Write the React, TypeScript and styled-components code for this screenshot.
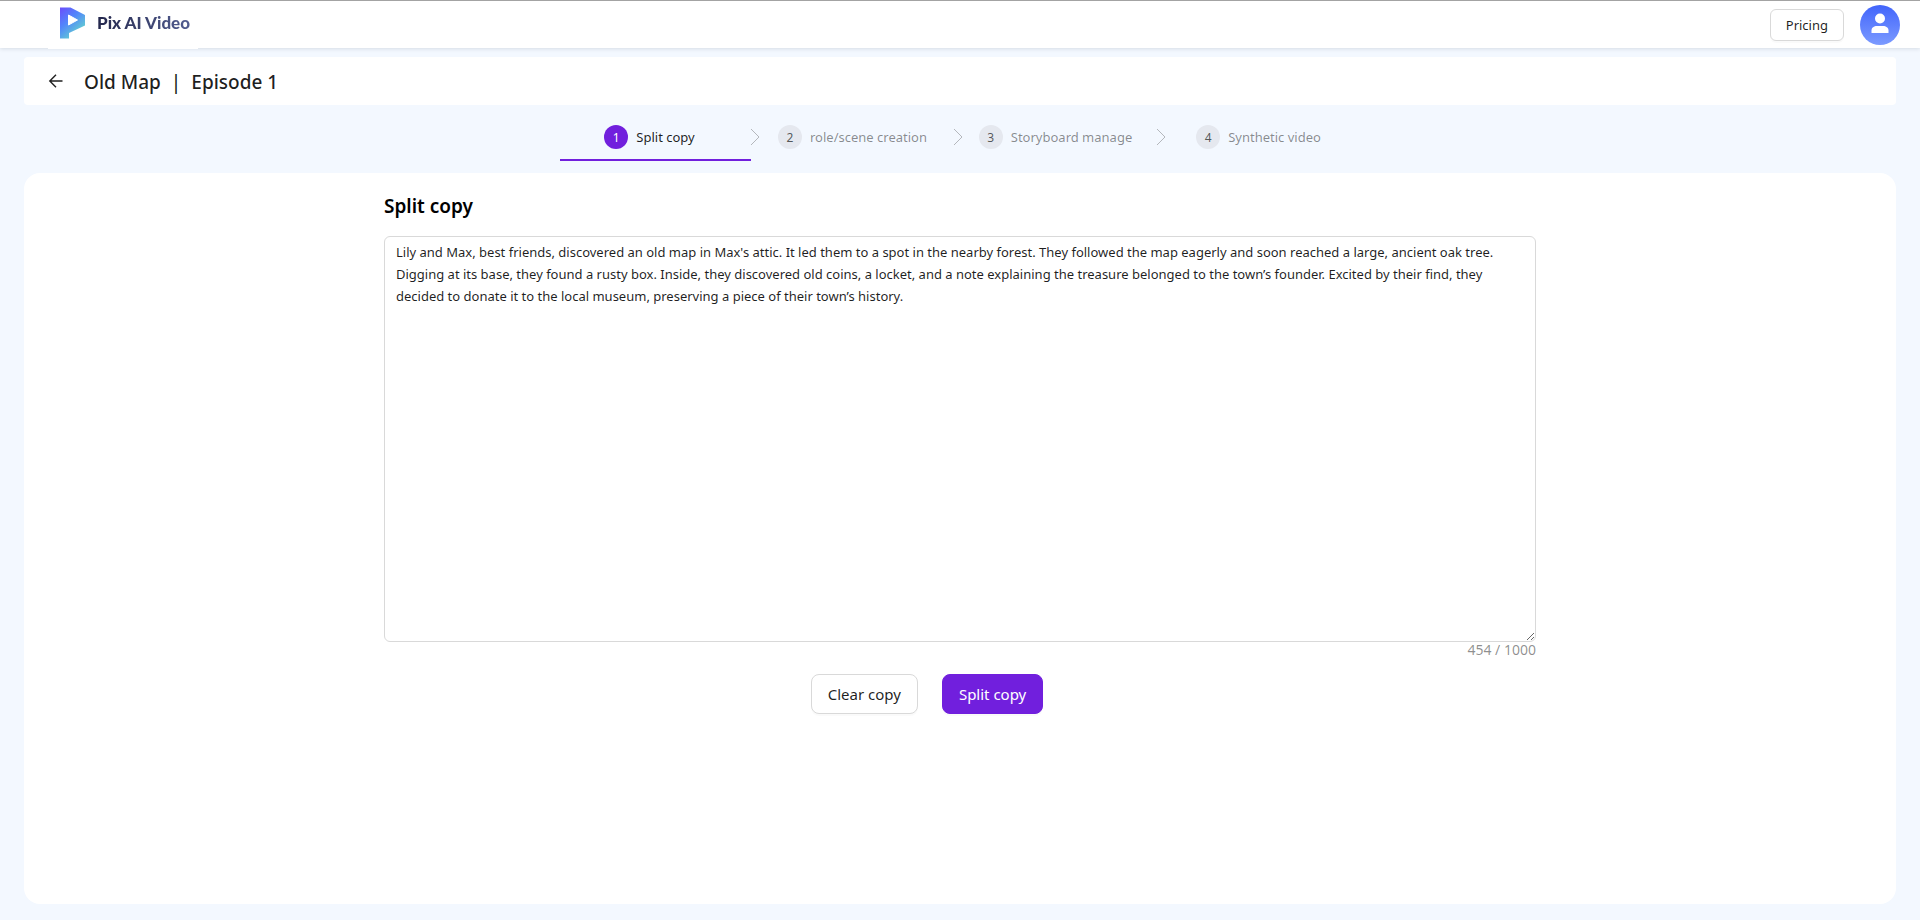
import React, { useState } from "react";
import styled, { createGlobalStyle, css } from "styled-components";

const INITIAL_COPY =
  "Lily and Max, best friends, discovered an old map in Max's attic. It led them to a spot in the nearby forest. They followed the map eagerly and soon reached a large, ancient oak tree. Digging at its base, they found a rusty box. Inside, they discovered old coins, a locket, and a note explaining the treasure belonged to the town’s founder. Excited by their find, they decided to donate it to the local museum, preserving a piece of their town’s history.";

const STEPS = ["Split copy", "role/scene creation", "Storyboard manage", "Synthetic video"];

const GlobalStyle = createGlobalStyle`
  *, *::before, *::after { box-sizing: border-box; }
  body {
    margin: 0;
    background: #f3f8ff;
    color: rgba(0, 0, 0, 0.88);
    font-family: "Segoe UI", "Noto Sans", "Open Sans", sans-serif;
    font-size: 13px;
    line-height: 22px;
  }
  button, textarea { font-family: inherit; }
`;

const Page = styled.div`
  display: flex;
  flex-direction: column;
  min-height: 100vh;
`;

const Header = styled.header`
  display: flex;
  align-items: center;
  justify-content: space-between;
  height: 48px;
  padding: 0 20px 0 48px;
  border-top: 1px solid #a3a3a3;
  background: #fff;
  box-shadow: 0 1px 4px rgba(0, 21, 41, 0.12);
`;

const Brand = styled.a`
  display: flex;
  align-items: center;
  gap: 12px;
  height: 48px;
  padding: 0 8px 4px 12px;
  background: #fff;
  text-decoration: none;
`;

const BrandName = styled.span`
  font-family: Lato, sans-serif;
  font-size: 17px;
  font-weight: 900;
  line-height: 24px;
  background: linear-gradient(90deg, #23274c, #525d90);
  background-clip: text;
  color: transparent;
`;

const HeaderActions = styled.div`
  display: flex;
  align-items: center;
  gap: 16px;
`;

const Button = styled.button<{ $primary?: boolean; $large?: boolean }>`
  height: 32px;
  padding: 0 15px;
  border: 1px solid #d9d9d9;
  border-radius: 6px;
  background: #fff;
  color: rgba(0, 0, 0, 0.88);
  box-shadow: 0 2px 0 rgba(0, 0, 0, 0.02);
  font-size: 13px;
  line-height: 22px;
  cursor: pointer;
  ${(p) =>
    p.$large &&
    css`
      height: 40px;
      padding: 0 16px;
      border-radius: 8px;
      font-size: 15px;
      line-height: 24px;
    `}
  ${(p) =>
    p.$primary &&
    css`
      border-color: #711fdd;
      background: #711fdd;
      color: #fff;
    `}
`;

const IconButton = styled.button`
  display: flex;
  padding: 0;
  border: 0;
  background: none;
  color: inherit;
  cursor: pointer;
`;

const Body = styled.main`
  display: flex;
  flex: 1;
  flex-direction: column;
  padding: 9px 24px 16px;
`;

const TitleBar = styled.div`
  display: flex;
  align-items: center;
  gap: 20px;
  height: 48px;
  padding: 0 24px;
  border-radius: 4px;
  background: #fff;
`;

const PageTitle = styled.h1`
  display: flex;
  gap: 10px;
  margin: 0;
  padding-top: 2px;
  font-size: 19px;
  font-weight: 500;
  line-height: 28px;
`;

const StepsRow = styled.nav`
  padding-right: 12px;
`;

const StepList = styled.ol`
  display: grid;
  grid-template-columns: repeat(4, 1fr);
  width: 100%;
  max-width: 812px;
  margin: 8px auto 12px;
  padding: 0;
  list-style: none;
`;

const Step = styled.li<{ $active: boolean }>`
  position: relative;
  display: flex;
  align-items: center;
  justify-content: center;
  gap: 8px;
  height: 48px;
  color: ${(p) => (p.$active ? "rgba(0, 0, 0, 0.88)" : "rgba(0, 0, 0, 0.45)")};
  ${(p) =>
    p.$active &&
    css`
      &::after {
        content: "";
        position: absolute;
        right: 0;
        bottom: 0;
        left: 12px;
        height: 2px;
        background: #711fdd;
      }
    `}
`;

const StepNumber = styled.span<{ $active: boolean }>`
  display: flex;
  align-items: center;
  justify-content: center;
  width: 24px;
  height: 24px;
  padding-top: 1px;
  border-radius: 50%;
  background: ${(p) => (p.$active ? "#711fdd" : "#e5e8ef")};
  color: ${(p) => (p.$active ? "#fff" : "rgba(0, 0, 0, 0.65)")};
  font-size: 12px;
`;

const StepArrow = styled.svg`
  position: absolute;
  top: 15px;
  left: 100%;
`;

const Panel = styled.section`
  flex: 1;
  padding: 20px 24px;
  border-radius: 16px;
  background: #fff;
`;

const Content = styled.div`
  display: flex;
  flex-direction: column;
  max-width: 1152px;
  margin: 0 auto;
`;

const SectionTitle = styled.label`
  margin-bottom: 17px;
  color: #000;
  font-size: 19px;
  font-weight: 600;
  line-height: 26px;
`;

const CopyInput = styled.textarea`
  display: block;
  width: 100%;
  height: 406px;
  padding: 4px 11px;
  border: 1px solid #d9d9d9;
  border-radius: 6px;
  outline: 0;
  background: #fff;
  color: rgba(0, 0, 0, 0.88);
  font-size: 13px;
  line-height: 22px;
  resize: vertical;
`;

const Counter = styled.output`
  align-self: flex-end;
  height: 20px;
  color: rgba(0, 0, 0, 0.45);
  font-size: 14px;
  line-height: 16px;
`;

const Actions = styled.div`
  display: flex;
  justify-content: center;
  gap: 24px;
  margin-top: 12px;
  padding-right: 66px;
`;

const Logo = () => (
  <svg width="25" height="32" viewBox="0 0 25 32" aria-hidden="true">
    <defs>
      <linearGradient id="logo-fill" x1="0" y1="0" x2="0.7" y2="1">
        <stop offset="0" stopColor="#6a4dfb" />
        <stop offset="0.45" stopColor="#5286fb" />
        <stop offset="0.9" stopColor="#62cdd2" />
      </linearGradient>
    </defs>
    <path fill="url(#logo-fill)" d="M0 .5H10.5L25 8V18.500L9 26V31.500H0Z" />
    <path fill="#fff" stroke="#fff" strokeWidth="1" strokeLinejoin="round" d="M8.500 8V18L17.500 13Z" />
  </svg>
);

const Avatar = () => (
  <svg width="40" height="40" viewBox="0 0 40 40" aria-hidden="true">
    <defs>
      <linearGradient id="avatar-fill" x1="0" y1="0" x2="0" y2="1">
        <stop offset="0" stopColor="#4265fb" />
        <stop offset="1" stopColor="#7b9aff" />
      </linearGradient>
    </defs>
    <circle cx="20" cy="20" r="20" fill="url(#avatar-fill)" />
    <circle cx="20" cy="13.500" r="5" fill="#fff" />
    <path fill="#fff" d="M11.500 28V25.500C11.500 22.500 14 21 17 21H23C26 21 28.500 22.500 28.500 25.500V28Z" />
  </svg>
);

const BackIcon = () => (
  <svg width="16" height="16" viewBox="0 0 16 16" fill="none" stroke="currentColor" strokeWidth="1.4" aria-hidden="true">
    <path d="M14.500 8H2M8 1.800L1.800 8L8 14.200" />
  </svg>
);

export default function App() {
  const [copy, setCopy] = useState(INITIAL_COPY);

  return (
    <Page>
      <GlobalStyle />
      <Header>
        <Brand href="#">
          <Logo />
          <BrandName>Pix AI Video</BrandName>
        </Brand>
        <HeaderActions>
          <Button type="button">Pricing</Button>
          <IconButton type="button" aria-label="Account">
            <Avatar />
          </IconButton>
        </HeaderActions>
      </Header>
      <Body>
        <TitleBar>
          <IconButton type="button" aria-label="Back">
            <BackIcon />
          </IconButton>
          <PageTitle>
            <span>Old Map</span>
            <span>|</span>
            <span>Episode 1</span>
          </PageTitle>
        </TitleBar>
        <StepsRow aria-label="Progress">
          <StepList>
            {STEPS.map((label, i) => (
              <Step key={label} $active={i === 0} aria-current={i === 0 ? "step" : undefined}>
                <StepNumber $active={i === 0}>{i + 1}</StepNumber>
                <span>{label}</span>
                {i < STEPS.length - 1 && (
                  <StepArrow width="9" height="18" viewBox="0 0 9 18" fill="none" stroke="#b4b7bc" aria-hidden="true">
                    <path d="M0 1L8 9L0 17" />
                  </StepArrow>
                )}
              </Step>
            ))}
          </StepList>
        </StepsRow>
        <Panel>
          <Content>
            <SectionTitle htmlFor="copy">Split copy</SectionTitle>
            <CopyInput
              id="copy"
              maxLength={1000}
              spellCheck={false}
              value={copy}
              onChange={(e) => setCopy(e.target.value)}
            />
            <Counter htmlFor="copy">{copy.length} / 1000</Counter>
            <Actions>
              <Button type="button" $large onClick={() => setCopy("")}>
                Clear copy
              </Button>
              <Button type="button" $large $primary>
                Split copy
              </Button>
            </Actions>
          </Content>
        </Panel>
      </Body>
    </Page>
  );
}
